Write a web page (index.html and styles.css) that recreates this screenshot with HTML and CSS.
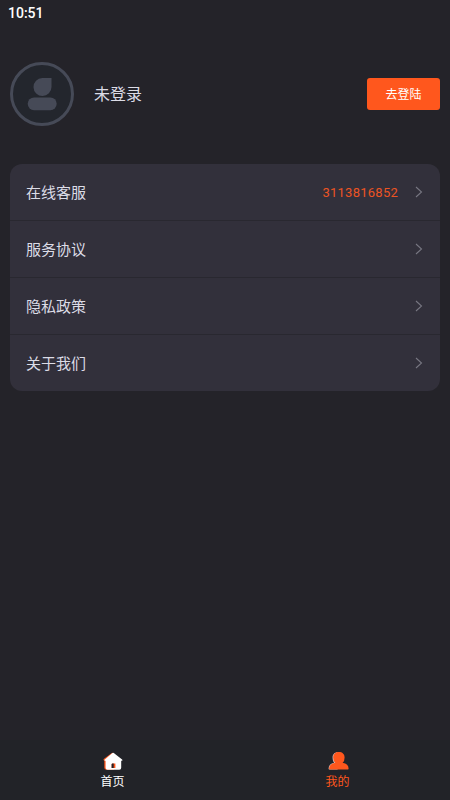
FILE: index.html
```html
<!DOCTYPE html>
<html lang="zh-CN">
<head>
<meta charset="utf-8">
<title>我的</title>
<link rel="stylesheet" href="styles.css">
</head>
<body>
<header class="status">10:51</header>
<section class="profile">
  <svg class="avatar" viewBox="0 0 64 64">
    <circle cx="32" cy="32" r="30.5" fill="#23262d" stroke="#464a57" stroke-width="3"/>
    <path d="M41.5 16H32.3a9 9 0 1 0 9.2 9z" fill="#464a57"/>
    <rect x="17.7" y="35.5" width="29" height="12.7" rx="6.35" fill="#464a57"/>
  </svg>
  <div class="name">未登录</div>
  <button class="login">去登陆</button>
</section>
<main class="menu">
  <div class="row"><span class="label">在线客服</span><span class="number">3113816852</span><svg class="arrow" viewBox="0 0 8 12"><path d="M1 1l5.5 5L1 11"/></svg></div>
  <div class="row"><span class="label">服务协议</span><svg class="arrow" viewBox="0 0 8 12"><path d="M1 1l5.5 5L1 11"/></svg></div>
  <div class="row"><span class="label">隐私政策</span><svg class="arrow" viewBox="0 0 8 12"><path d="M1 1l5.5 5L1 11"/></svg></div>
  <div class="row"><span class="label">关于我们</span><svg class="arrow" viewBox="0 0 8 12"><path d="M1 1l5.5 5L1 11"/></svg></div>
</main>
<nav class="tabs">
  <div class="tab">
    <svg class="icon" viewBox="0 0 20 20">
      <path d="M.6 9.2Q.3 8.4 1 7.8L8.5 2.2Q10 1.3 11 2.2V18.8H3.5Q1.3 18.8 1.3 16.8V9.5z" fill="#ff571d"/>
      <path d="M1.6 8.8L9.1 2.2q1-.8 2 0l8 6.4q.9 1-.2 1.2h-.7v7q0 2-1.9 2H4.5q-1.9 0-1.9-2v-7H2q-1-.2-.4-1z" fill="#fff"/>
      <path d="M8.7 17v-3.6q0-1 1-1h2.7V17z" fill="#ff571d"/>
      <path d="M8.6 17v-3.6q0-1 1-1h1.1V17z" fill="#24232a"/>
    </svg>
    <span>首页</span>
  </div>
  <div class="tab active">
    <svg class="icon" viewBox="0 0 21 20">
      <path d="M6.2 11.8C5 10.5 4.6 8.5 4.6 6.5c0-3 2-5.2 5-5.2v17.2H1.2Q.6 18.5.6 17.8q0-4.8 5.6-6z" fill="#cfc5ca"/>
      <path d="M7.3 11.8Q5.2 9.8 5.2 6.4C5.2 3 7.5 1 10.9 1s5.7 2 5.7 5.4q0 3.6-2 5.4 6 1 6 6 0 .8-.8.8H2q-.9 0-.9-.8 0-5 6.2-6z" fill="#ff571d"/>
    </svg>
    <span>我的</span>
  </div>
</nav>
</body>
</html>
```

FILE: styles.css
```css
* { box-sizing: border-box; }
body {
  margin: 0;
  height: 800px;
  display: flex;
  flex-direction: column;
  background: #242329;
  color: #dcdce6;
  font-family: Roboto, "Noto Sans CJK SC", sans-serif;
  overflow: hidden;
}
.status {
  height: 26px;
  padding-left: 8px;
  font-size: 14px;
  font-weight: 500;
  line-height: 26px;
  color: #fff;
}
.profile {
  display: flex;
  align-items: center;
  height: 64px;
  margin: 36px 10px 38px;
}
.avatar { width: 64px; height: 64px; }
.name { margin-left: 20px; padding-top: 2px; font-size: 16px; line-height: 24px; }
.login {
  width: 73px;
  height: 32px;
  margin-left: auto;
  padding: 2px 0 0;
  border: 0;
  border-radius: 3px;
  background: #ff571d;
  color: #fff;
  font: 12px/30px Roboto, "Noto Sans CJK SC", sans-serif;
}
.menu {
  margin: 0 10px;
  border-radius: 12px;
  background: #32303b;
  overflow: hidden;
}
.row {
  display: flex;
  align-items: center;
  height: 57px;
  padding: 0 17px 0 16px;
  border-bottom: 1px solid #292830;
  font-size: 15px;
}
.row:last-child { height: 56px; border-bottom: 0; }
.label { padding-bottom: 2px; }
.number {
  margin-left: auto;
  color: #ec5423;
  font-size: 13px;
  letter-spacing: .25px;
}
.arrow {
  width: 8px;
  height: 12px;
  margin-left: auto;
  fill: none;
  stroke: #777681;
  stroke-width: 1.1;
}
.number + .arrow { margin-left: 17px; }
.tabs {
  display: flex;
  height: 60px;
  margin-top: auto;
  background: #222328;
}
.tab {
  flex: 1;
  display: flex;
  flex-direction: column;
  align-items: center;
  padding-top: 11px;
  color: #fff;
  font-size: 12px;
  line-height: 18px;
}
.icon { width: 20px; height: 20px; margin-bottom: 2px; }
.tab.active { color: #ff571d; }
.tab.active .icon { width: 21px; position: relative; left: 1px; }
```
